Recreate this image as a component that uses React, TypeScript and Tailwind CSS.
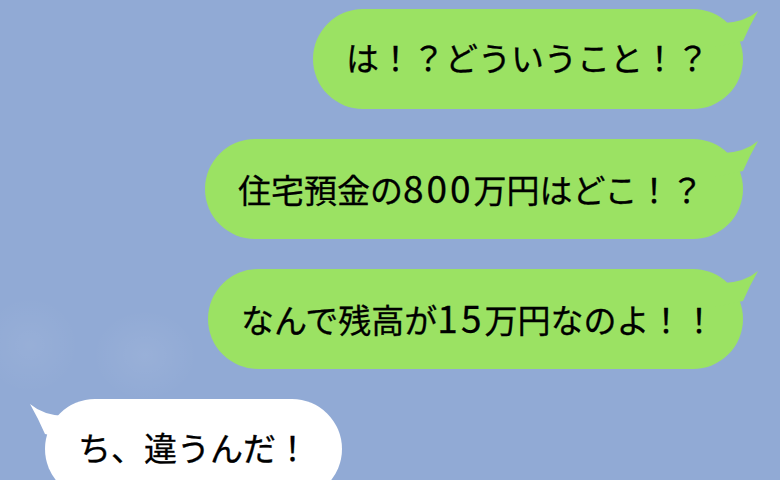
import React from 'react';

type Side = 'me' | 'them';

const GREEN = '#9be263';

// Curved speech tail that sticks out of the top corner of a bubble
const Tail = ({ side }: { side: Side }) => (
  <svg
    viewBox="0 0 60 60"
    className={
      side === 'me'
        ? 'absolute top-0 -right-5 w-[60px] h-[60px] overflow-visible'
        : 'absolute top-[3px] -left-5 w-[60px] h-[60px] overflow-visible -scale-x-100'
    }
  >
    <path
      d="M12 24 L21 14 Q42 13 55 2 Q47 16 40 32 L12 38 Z"
      fill={side === 'me' ? GREEN : '#ffffff'}
    />
  </svg>
);

const Bubble = ({
  side,
  width,
  children,
}: {
  side: Side;
  width: string;
  children: React.ReactNode;
}) => (
  <div
    className={`relative flex h-[100px] items-center rounded-full pb-[4px] pl-[33px] ${width} ${
      side === 'me' ? 'self-end bg-[#9be263]' : 'self-start bg-white'
    }`}
  >
    <Tail side={side} />
    <span className="whitespace-nowrap text-[33px] font-normal leading-none text-black [-webkit-text-stroke:0.3px_#000]">
      {children}
    </span>
  </div>
);

// Latin digits sit a little larger and wider than the kana around them
const Num = ({ children }: { children: React.ReactNode }) => (
  <span className="text-[37px] tracking-[3px]">{children}</span>
);

export default function App() {
  return (
    <div
      className="h-[480px] w-[780px] overflow-hidden bg-[#91aad5] bg-[radial-gradient(ellipse_70px_70px_at_30px_345px,rgba(255,255,255,0.06),transparent_70%),radial-gradient(ellipse_75px_65px_at_145px_355px,rgba(255,255,255,0.07),transparent_70%)]"
      style={{ fontFamily: '"Noto Sans CJK JP", "Noto Sans", sans-serif' }}
    >
      <div className="flex flex-col gap-[30px] pl-[45px] pr-[37px] pt-[9px]">
        <Bubble side="me" width="w-[430px]">
          は！？どういうこと！？
        </Bubble>
        <Bubble side="me" width="w-[538px]">
          住宅預金の<Num>800</Num>万円はどこ！？
        </Bubble>
        <Bubble side="me" width="w-[535px]">
          なんで残高が<Num>15</Num>万円なのよ！！
        </Bubble>
        <Bubble side="them" width="w-[297px]">
          ち、違うんだ！
        </Bubble>
      </div>
    </div>
  );
}
